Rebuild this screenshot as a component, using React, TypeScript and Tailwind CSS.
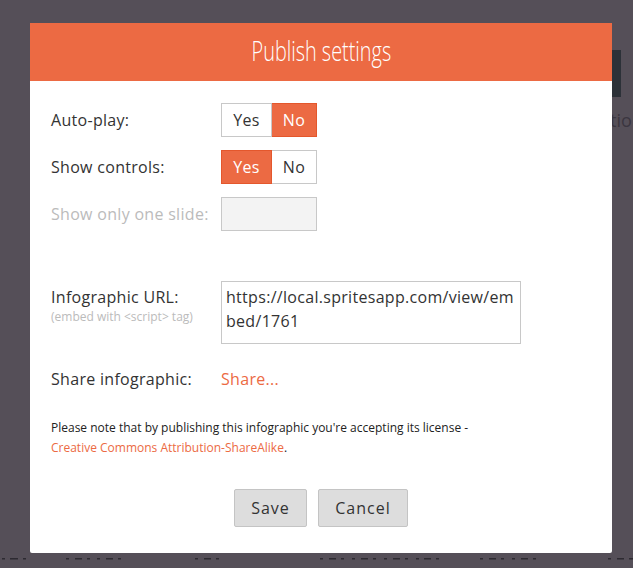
import React from "react";

const orange = "#ec6a43";

function Toggle({ value }: { value: "yes" | "no" }) {
  const on = "bg-[#ec6a43] border-[#e4572c] text-white";
  const off = "bg-white border-[#c8c8c8] text-[#333]";
  return (
    <div className="flex h-[34px]">
      <div className={`w-[51px] flex items-center justify-center border ${value === "yes" ? on : off}`}>Yes</div>
      <div className={`w-[45px] flex items-center justify-center border border-l-0 ${value === "no" ? on : off}`}>No</div>
    </div>
  );
}

export default function App() {
  const dashes: [number, number][] = [
    [2, 5], [10, 18], [23, 26], [66, 69], [75, 82], [87, 90], [97, 100], [106, 113], [118, 121],
    [195, 198], [204, 211], [216, 219], [320, 323], [329, 336], [341, 344], [352, 355], [361, 368],
    [373, 376], [384, 387], [393, 400], [405, 408], [416, 419], [424, 431], [436, 439],
    [480, 483], [489, 496], [501, 504], [512, 515], [521, 528], [533, 536], [608, 611], [617, 624], [629, 633],
  ];
  return (
    <div
      className="relative w-[633px] h-[568px] overflow-hidden bg-[#554f58] pt-[23px] pl-[30px]"
      style={{ fontFamily: "'Open Sans', 'Noto Sans', sans-serif" }}
    >
      {/* background page bits */}
      <div className="absolute left-[612px] top-[50px] w-[9px] h-[47px] bg-[#2c3138]" />
      <div className="absolute left-[600px] top-[111px] text-[18px] text-[#3b3640] leading-none">atio</div>
      <svg className="absolute left-0 top-[557px]" width="633" height="4">
        {dashes.map(([a, b], i) => (
          <rect key={i} x={a} y={1} width={b - a} height={1.5} fill="#2d2a31" />
        ))}
      </svg>

      <div className="relative w-[582px] h-[530px] bg-white rounded-b-[2px]">
        <div className="h-[58px] bg-[#ec6a43] flex items-center justify-center">
          <div className="text-white text-[28px] font-light leading-none scale-x-[0.71] whitespace-nowrap -mt-[4px]">
            Publish settings
          </div>
        </div>

        <div className="pl-[21px] pt-[22px] text-[16px] text-[#333] tracking-[0.3px]">
          <div className="flex items-center h-[34px]">
            <div className="w-[170px]">Auto-play:</div>
            <Toggle value="no" />
          </div>
          <div className="flex items-center h-[34px] mt-[13px]">
            <div className="w-[170px]">Show controls:</div>
            <Toggle value="yes" />
          </div>
          <div className="flex items-center h-[34px] mt-[13px]">
            <div className="w-[170px] text-[#bbbbbb]">Show only one slide:</div>
            <div className="w-[96px] h-[34px] bg-[#f3f3f3] border border-[#c8c8c8]" />
          </div>

          <div className="flex mt-[50px]">
            <div className="w-[170px] pt-[5px]">
              <div className="leading-[22px]">Infographic URL:</div>
              <div className="text-[12px] tracking-normal text-[#bbbbbb] leading-[14px] mt-[2px]">(embed with &lt;script&gt; tag)</div>
            </div>
            <div className="w-[300px] h-[63px] border border-[#c8c8c8] px-[4px] pt-[3px] leading-[24px] break-all">
              https://local.spritesapp.com/view/embed/1761
            </div>
          </div>

          <div className="flex items-center mt-[24px] h-[22px]">
            <div className="w-[170px]">Share infographic:</div>
            <div style={{ color: orange }}>Share...</div>
          </div>

          <div className="mt-[28px] text-[12px] tracking-normal leading-[20px] text-[#222]">
            <div>Please note that by publishing this infographic you're accepting its license -</div>
            <div>
              <span style={{ color: orange }}>Creative Commons Attribution-ShareAlike</span>.
            </div>
          </div>
        </div>

        <div className="flex justify-center gap-[11px] mt-[31px]">
          <div className="w-[73px] h-[38px] bg-[#dddddd] border border-[#c4c4c4] rounded-[2px] flex items-center justify-center text-[16px] text-[#333] tracking-[1px]">
            Save
          </div>
          <div className="w-[90px] h-[38px] bg-[#dddddd] border border-[#c4c4c4] rounded-[2px] flex items-center justify-center text-[16px] text-[#333] tracking-[1px]">
            Cancel
          </div>
        </div>
      </div>
    </div>
  );
}
